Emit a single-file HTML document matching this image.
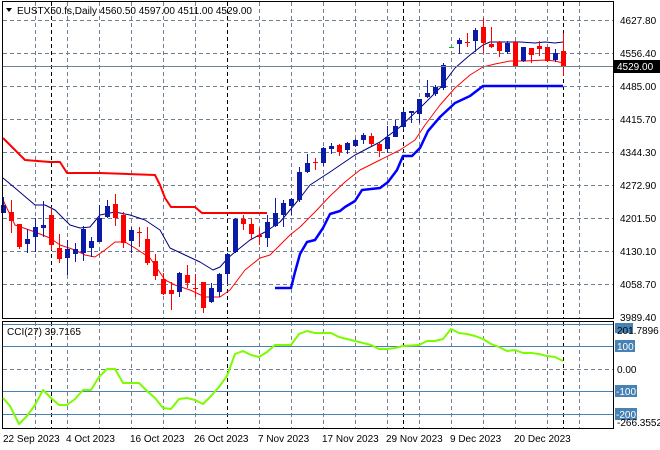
<!DOCTYPE html>
<html><head><meta charset="utf-8"><style>
html,body{margin:0;padding:0;background:#fff;width:660px;height:450px;overflow:hidden}
svg{display:block}
text{font-family:"Liberation Sans",Arial,sans-serif;font-size:10px;fill:#000}
</style></head><body>
<svg id="s" width="660" height="450" viewBox="0 0 660 450" xmlns="http://www.w3.org/2000/svg">
<rect width="660" height="450" fill="#fff"/>
<g id="grid"></g>
<g id="ind"></g>
<g id="cnd"></g>
<rect x="2.5" y="1.5" width="611" height="317" fill="none" stroke="#000" stroke-width="1"/>
<rect x="2.5" y="321.5" width="611" height="107" fill="none" stroke="#000" stroke-width="1"/>
<line x1="3" y1="66.5" x2="613" y2="66.5" stroke="#708090" stroke-width="1"/>
<line x1="3" y1="324.5" x2="613" y2="324.5" stroke="#4682b4"/>
<line x1="3" y1="346.5" x2="613" y2="346.5" stroke="#4682b4"/>
<line x1="3" y1="391.5" x2="613" y2="391.5" stroke="#4682b4"/>
<line x1="3" y1="414.5" x2="613" y2="414.5" stroke="#4682b4"/>
<line x1="3" y1="369.5" x2="613" y2="369.5" stroke="#708090" stroke-dasharray="4,3"/>
<g id="cci"></g>
<path d="M6 8 L12 8 L9 12 Z" fill="#000"/>
<text x="17" y="14">EUSTX50.fs,Daily  4560.50 4597.00 4511.00 4529.00</text>
<text x="7" y="335">CCI(27) 39.7165</text>
<g id="ax"></g>
<rect x="614" y="60" width="46" height="13" fill="#000"/>
<text x="617" y="70" style="fill:#fff">4529.00</text>
<rect x="615" y="323" width="18" height="10" fill="#4682b4"/>
<text x="617" y="334">201.7896</text>
<rect x="615" y="340" width="20" height="12" fill="#4682b4"/>
<text x="617" y="350" style="fill:#fff">100</text>
<text x="617" y="373">0.00</text>
<rect x="615" y="385" width="22" height="12" fill="#4682b4"/>
<text x="616" y="395" style="fill:#fff">-100</text>
<rect x="615" y="408" width="22" height="12" fill="#4682b4"/>
<text x="616" y="418" style="fill:#fff">-200</text>
<text x="617" y="426">-266.3552</text>
<text x="3" y="442">22 Sep 2023</text>
<text x="66" y="442">4 Oct 2023</text>
<text x="130" y="442">16 Oct 2023</text>
<text x="194" y="442">26 Oct 2023</text>
<text x="258" y="442">7 Nov 2023</text>
<text x="322" y="442">17 Nov 2023</text>
<text x="386" y="442">29 Nov 2023</text>
<text x="450" y="442">9 Dec 2023</text>
<text x="514" y="442">20 Dec 2023</text>
</svg>
<script>
var NS="http://www.w3.org/2000/svg";
function el(p,t,a){var e=document.createElementNS(NS,t);for(var k in a)e.setAttribute(k,a[k]);document.getElementById(p).appendChild(e);return e;}
var gx=[35,67,99,131,163,195,259,291,323,355,387,419,451,483,515,547,579];
gx.forEach(function(x){el("grid","line",{x1:x+.5,y1:2,x2:x+.5,y2:318,stroke:"#708090","stroke-dasharray":"4,3"});el("grid","line",{x1:x+.5,y1:322,x2:x+.5,y2:428,stroke:"#708090","stroke-dasharray":"4,3"});});
[51,227,403,563].forEach(function(x){el("grid","line",{x1:x+.5,y1:2,x2:x+.5,y2:318,stroke:"#000","stroke-dasharray":"4,3"});el("grid","line",{x1:x+.5,y1:322,x2:x+.5,y2:428,stroke:"#000","stroke-dasharray":"4,3"});});
var py=[20,53,86,119,152,185,218,251,284,317],pl=["4627.80","4556.40","4485.00","4415.70","4344.30","4272.90","4201.50","4130.10","4058.70","3989.40"];
py.forEach(function(y,i){if(i<9)el("grid","line",{x1:3,y1:y+.5,x2:613,y2:y+.5,stroke:"#708090","stroke-dasharray":"4,3"});var t=el("ax","text",{x:620,y:y+4});t.textContent=pl[i];});
function pl_(id,pts,col,w){el(id,"polyline",{points:pts.map(function(p){return p.join(",")}).join(" "),fill:"none",stroke:col,"stroke-width":w,"stroke-linejoin":"round"});}
pl_("ind",[[3,138],[15,150],[25,160],[50,162],[60,162],[67,173],[100,173],[155,175],[160,185],[165,198],[171,207],[195,207],[202,213],[267,213]],"#ff0000",2);
pl_("ind",[[275,288],[291,288],[295,272],[300,254],[307,242],[315,240],[323,228],[330,214],[340,211],[345,207],[355,201],[362,190],[380,188],[388,182],[397,170],[403,156],[412,156],[420,148],[428,131],[440,117],[455,103],[470,96],[483,86],[563,86]],"#0000ff",2.5);
pl_("ind",[[3,178],[15,188],[35,205],[45,205],[55,210],[70,225],[80,228],[90,227],[100,215],[115,212],[130,215],[145,220],[160,230],[170,248],[185,255],[200,262],[213,270],[220,267],[228,258],[235,252],[250,240],[265,232],[280,222],[300,198],[310,185],[330,172],[355,155],[380,142],[400,127],[420,108],[440,88],[455,68],[470,55],[483,45],[490,42],[520,42],[535,43],[545,42],[555,43],[563,42]],"#000080",1);
pl_("ind",[[3,200],[15,225],[35,232],[50,238],[60,245],[75,250],[85,255],[95,257],[105,250],[115,242],[125,242],[135,248],[150,258],[165,280],[175,285],[190,290],[205,297],[220,297],[230,290],[245,270],[260,258],[270,255],[280,245],[290,235],[300,227],[315,212],[330,196],[345,182],[360,170],[380,160],[400,150],[415,140],[425,125],[440,105],[455,88],[470,75],[483,67],[495,64],[510,61],[525,61],[545,60],[555,61],[563,63]],"#ff0000",1);
var C=[["b",205,213,197,213],["r",212,221,200,233],["r",224,247,224,249],["b",239,244,229,253],["b",227,237,218,252],["b",225,228,201,237],["r",215,245,207,250],["r",248,259,234,263],["b",249,258,240,275],["b",249,254,243,262],["b",229,253,226,261],["b",241,248,237,257],["b",218,242,205,242],["b",206,217,200,218],["r",204,218,194,226],["r",215,243,212,248],["b",230,241,227,253],["r",232,233,227,247],["r",239,263,227,265],["r",261,276,254,280],["r",279,294,273,295],["r",290,294,282,310],["b",273,292,272,297],["r",275,283,265,288],["r",288,289,274,297],["r",282,308,282,313],["b",288,302,283,303],["b",274,292,273,297],["b",254,274,253,283],["b",219,252,218,253],["r",219,224,215,230],["r",224,234,218,240],["r",235,237,228,245],["b",222,238,215,247],["b",213,226,198,227],["b",203,215,200,227],["b",199,206,198,215],["b",172,200,167,202],["b",163,172,154,173],["r",162,163,158,170],["b",148,163,147,166],["b",146,149,143,154],["r",145,152,144,156],["b",143,150,142,154],["b",140,146,139,147],["b",135,140,133,144],["r",136,144,133,146],["r",144,151,143,157],["b",137,149,126,153],["b",126,137,120,137],["b",112,127,110,130],["b",111,113,111,123],["b",99,114,99,123],["b",93,97,80,98],["b",87,94,85,96],["b",65,88,63,90],["g",47,48,47,48],["b",40,44,38,54],["r",42,43,33,47],["b",30,41,28,52],["r",27,43,18,53],["r",44,47,27,48],["r",42,51,41,57],["b",43,52,41,54],["r",42,67,41,67],["b",47,61,47,62],["r",48,55,48,63],["r",46,49,41,56],["r",47,61,47,62],["b",53,60,49,62],["r",51,67,33,76]];
C.forEach(function(c,i){var x=3+8*i;var col=c[0]=="b"?"#0c1aa8":(c[0]=="r"?"#ff0000":"#00c000");
el("cnd","rect",{x:x,y:c[3],width:1,height:Math.max(1,c[4]-c[3]),fill:col});
if(c[0]=="g"){el("cnd","rect",{x:x-2,y:c[1],width:5,height:1,fill:"#00c000"});return;}
var h=c[2]-c[1];el("cnd","rect",{x:x-2,y:c[1],width:5,height:Math.max(1,h),fill:col});});
pl_("cci",[[3,398],[10,406],[19,424],[27,416],[35,405],[43,390],[51,398],[59,405],[67,405],[75,399],[83,390],[91,390],[99,377],[107,369],[115,369],[123,383],[131,383],[139,383],[147,391],[155,398],[163,408],[171,409],[179,399],[187,398],[195,400],[203,404],[211,396],[219,387],[227,376],[235,354],[243,351],[251,355],[259,357],[267,352],[275,345],[283,345],[291,345],[299,334],[307,331],[315,333],[331,333],[339,337],[347,339],[355,341],[363,343],[371,345],[379,349],[387,349],[395,348],[403,346],[419,345],[427,341],[435,341],[443,339],[451,329],[459,333],[467,334],[475,336],[483,339],[491,344],[499,347],[507,351],[515,350],[523,353],[531,353],[539,354],[547,356],[555,357],[563,361]],"#7cfc00",2);
</script>
</body></html>
